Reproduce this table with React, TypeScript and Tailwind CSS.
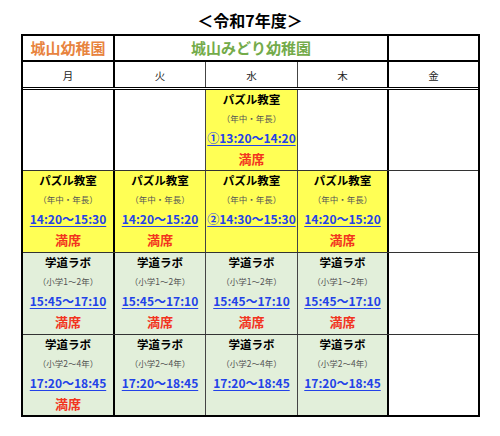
import React from "react";

type CellData = {
  kind: "empty" | "puzzle" | "lab";
  title?: string;
  sub?: string;
  time?: string;
  full?: boolean;
};

const colBorder = [
  "border-r-2 border-r-black",
  "border-r border-r-[#444]",
  "border-r border-r-[#444]",
  "border-r-2 border-r-black",
  "",
];

function Cell({ d, i }: { d: CellData; i: number }) {
  const bg =
    d.kind === "puzzle" ? "bg-[#ffff55]" : d.kind === "lab" ? "bg-[#e2efda]" : "bg-white";
  return (
    <div className={`${bg} ${colBorder[i]} h-full flex flex-col items-center`}>
      {d.kind !== "empty" && (
        <>
          <div className="text-[11.5px] font-bold leading-[19px] text-black">{d.title}</div>
          <div className="text-[8.5px] leading-[19px] text-[#555]">{d.sub}</div>
          <div className="text-[12px] font-bold leading-[19px] text-[#2342e8] underline decoration-[#2342e8] underline-offset-2">
            {d.time}
          </div>
          {d.full && (
            <div className="mt-[2px] text-[13px] font-bold leading-[20px] text-[#f2351f]">満席</div>
          )}
        </>
      )}
    </div>
  );
}

const E: CellData = { kind: "empty" };
const P = (time: string, full: boolean): CellData => ({
  kind: "puzzle",
  title: "パズル教室",
  sub: "（年中・年長）",
  time,
  full,
});
const L = (sub: string, time: string, full: boolean): CellData => ({
  kind: "lab",
  title: "学道ラボ",
  sub,
  time,
  full,
});

const rows: { h: string; cells: CellData[] }[] = [
  { h: "h-[81px] border-b border-b-[#333]", cells: [E, E, P("①13:20～14:20", true), E, E] },
  {
    h: "h-[82px] border-b border-b-[#333]",
    cells: [
      P("14:20～15:30", true),
      P("14:20～15:20", true),
      P("②14:30～15:30", false),
      P("14:20～15:20", true),
      E,
    ],
  },
  {
    h: "h-[82px] border-b border-b-[#333]",
    cells: [
      L("（小学1～2年）", "15:45～17:10", true),
      L("（小学1～2年）", "15:45～17:10", true),
      L("（小学1～2年）", "15:45～17:10", true),
      L("（小学1～2年）", "15:45～17:10", true),
      E,
    ],
  },
  {
    h: "h-[80px]",
    cells: [
      L("（小学2～4年）", "17:20～18:45", true),
      L("（小学2～4年）", "17:20～18:45", false),
      L("（小学2～4年）", "17:20～18:45", false),
      L("（小学2～4年）", "17:20～18:45", false),
      E,
    ],
  },
];

const days = ["月", "火", "水", "木", "金"];

export default function App() {
  return (
    <div
      className="w-[500px] h-[436px] bg-white"
      style={{ fontFamily: '"Noto Sans CJK JP", "Noto Sans", sans-serif' }}
    >
      <div className="h-[34px] pt-[10px] text-center text-[16px] font-bold leading-[20px] text-black">
        ＜令和7年度＞
      </div>
      <div className="ml-[21px] w-[459px] border-2 border-black">
        <div className="grid h-[26px] grid-cols-[92px_274px_89px] border-b-2 border-b-black">
          <div className="flex items-center justify-center border-r-2 border-r-black text-[15px] font-bold text-[#e8843f]">
            城山幼稚園
          </div>
          <div className="flex items-center justify-center border-r-2 border-r-black text-[15px] font-bold text-[#74ab4a]">
            城山みどり幼稚園
          </div>
          <div />
        </div>
        <div className="grid h-[28px] grid-cols-[92px_91px_92px_91px_89px] border-b-[3px] border-double border-b-black">
          {days.map((d, i) => (
            <div
              key={d}
              className={`flex items-center justify-center pt-[2px] text-[10.5px] text-[#222] ${colBorder[i]}`}
            >
              {d}
            </div>
          ))}
        </div>
        {rows.map((r, ri) => (
          <div key={ri} className={`grid grid-cols-[92px_91px_92px_91px_89px] ${r.h}`}>
            {r.cells.map((c, ci) => (
              <Cell key={ci} d={c} i={ci} />
            ))}
          </div>
        ))}
      </div>
    </div>
  );
}
